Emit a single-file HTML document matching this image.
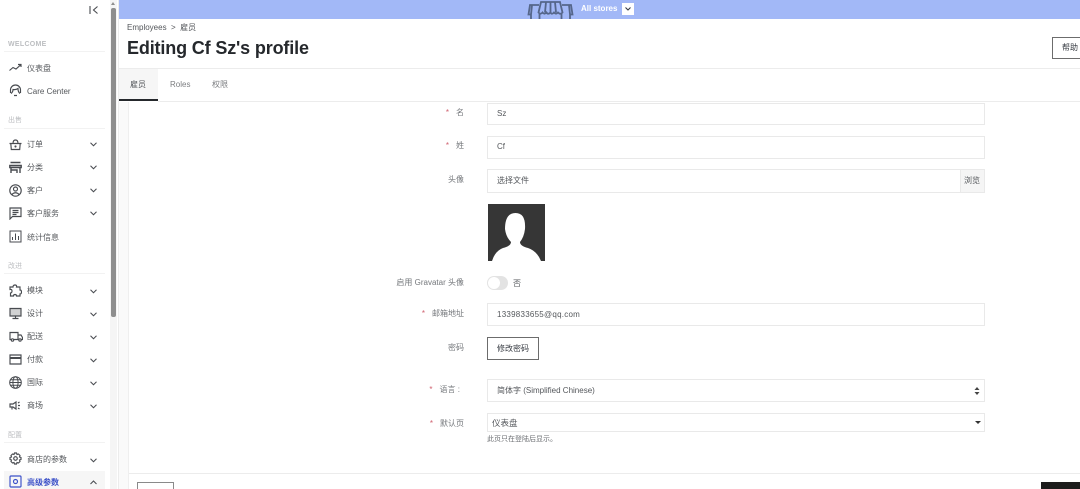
<!DOCTYPE html>
<html><head><meta charset="utf-8">
<style>
html,body{margin:0;padding:0;width:1080px;height:489px;overflow:hidden;background:#fff}
body{position:relative;font-family:"Liberation Sans","Noto Sans CJK SC",sans-serif;color:#363a41}
.a{position:absolute}
.t{position:absolute;white-space:nowrap;line-height:16px;font-size:8px}
.nav{color:#54575b;left:27px}
.sec{left:8px;font-size:7px;color:#bcbec1}
.hr{position:absolute;left:4px;width:101px;height:1px;background:#f2f2f2}
.lab{position:absolute;right:616px;white-space:nowrap;font-size:8px;line-height:16px;color:#75787c}
.req{color:#d0616f;margin-right:7px}
.inp{position:absolute;left:487px;width:496px;background:#fff;border:1px solid #e9e9e9;font-size:8px;color:#54575b;box-sizing:content-box}
.inp span{position:absolute;left:9px;white-space:nowrap}
svg.i{position:absolute;left:9px;width:13px;height:13px;fill:none;stroke:#484b50;stroke-width:1.15}
svg.c{position:absolute;left:90px;width:7px;height:5px;fill:none;stroke:#484b50;stroke-width:1.05}
</style></head><body>

<!-- sidebar -->
<svg class="a" style="left:89px;top:5px;width:10px;height:10px" viewBox="0 0 10 10" fill="none" stroke="#484b50" stroke-width="1.1"><path d="M1 1V9M8.500 1.500L4.500 5L8.500 8.500"/></svg>
<div class="t sec" style="top:37px;font-weight:bold;letter-spacing:.3px">WELCOME</div><div class="hr" style="top:51px"></div>
<svg class="i" style="top:61px" viewBox="0 0 13 13"><path d="M0.500 9.500L4 6.500L7 8L11.500 4M9 3.500H12V6"/></svg>
<div class="t nav" style="top:61px">仪表盘</div>
<svg class="i" style="top:84px" viewBox="0 0 13 13"><path d="M1.500 9V6A5 5 0 0 1 11.500 6V9M2 9.500Q4 8 4 5.500Q7 6 9 4.500Q9 8 11 9.500M5 11.500H8"/></svg>
<div class="t nav" style="top:84px">Care Center</div>

<div class="t sec" style="top:113px">出售</div><div class="hr" style="top:128px"></div>
<svg class="i" style="top:138px" viewBox="0 0 13 13"><path d="M0.500 5.500H12.500M1.800 5.500L2.300 11.500H10.700L11.200 5.500M4 5.500Q4 2 6.500 2Q9 2 9 5.500"/><circle cx="6.500" cy="8.500" r=".5"/></svg>
<div class="t nav" style="top:137px">订单</div><svg class="c" style="top:142px" viewBox="0 0 7 5"><path d="M.5 .8L3.500 3.800L6.500 .8"/></svg>
<svg class="i" style="top:161px" viewBox="0 0 13 13"><path d="M1.500 1.500H11.500M0.800 4.500H12.200V6.500H0.800ZM2 6.500V12M2 9H8V12M11 6.500V12" stroke-width="1.400"/></svg>
<div class="t nav" style="top:160px">分类</div><svg class="c" style="top:165px" viewBox="0 0 7 5"><path d="M.5 .8L3.500 3.800L6.500 .8"/></svg>
<svg class="i" style="top:184px" viewBox="0 0 13 13"><circle cx="6.500" cy="6.500" r="5.700"/><circle cx="6.500" cy="5" r="2"/><path d="M2.800 10.500Q6.500 7 10.200 10.500"/></svg>
<div class="t nav" style="top:183px">客户</div><svg class="c" style="top:188px" viewBox="0 0 7 5"><path d="M.5 .8L3.500 3.800L6.500 .8"/></svg>
<svg class="i" style="top:207px" viewBox="0 0 13 13"><path d="M1 1H12V9.500H3.500L1 12ZM3.500 3.500H9.500M3.500 5.500H9.500M3.500 7.500H7.500"/></svg>
<div class="t nav" style="top:206px">客户服务</div><svg class="c" style="top:211px" viewBox="0 0 7 5"><path d="M.5 .8L3.500 3.800L6.500 .8"/></svg>
<svg class="i" style="top:230px;stroke-width:1" viewBox="0 0 13 13"><path d="M1 1H12V12H1ZM3.500 10V7M6.500 10V3.500M9.500 10V6"/></svg>
<div class="t nav" style="top:230px">统计信息</div>

<div class="t sec" style="top:259px">改进</div><div class="hr" style="top:273px"></div>
<svg class="i" style="top:284px" viewBox="0 0 13 13"><path d="M1 3H4Q4 1 6 1Q8 1 7.500 3H11V6Q12.500 6 12.500 8T11 10V12H7.500Q7.500 10.500 6 10.500T4.500 12H1.500V9Q3 9 3 7T1 5.500Z"/></svg>
<div class="t nav" style="top:283px">模块</div><svg class="c" style="top:289px" viewBox="0 0 7 5"><path d="M.5 .8L3.500 3.800L6.500 .8"/></svg>
<svg class="i" style="top:307px" viewBox="0 0 13 13"><path d="M1 1.500H12V9H1Z" fill="#484b50" fill-opacity=".25"/><path d="M3.500 11.500H9.500M6.500 9V11.500"/></svg>
<div class="t nav" style="top:306px">设计</div><svg class="c" style="top:312px" viewBox="0 0 7 5"><path d="M.5 .8L3.500 3.800L6.500 .8"/></svg>
<svg class="i" style="top:330px;width:14px" viewBox="0 0 14 13"><path d="M2 9.500H1V2.500H9V9.500H5M9 5H12L13.500 7.500V9.500H12M9 9.500H10"/><circle cx="3.500" cy="10" r="1.200"/><circle cx="11" cy="10" r="1.200"/></svg>
<div class="t nav" style="top:329px">配送</div><svg class="c" style="top:335px" viewBox="0 0 7 5"><path d="M.5 .8L3.500 3.800L6.500 .8"/></svg>
<svg class="i" style="top:353px" viewBox="0 0 13 13"><path d="M1 2H12V11H1Z"/><path d="M1 5H12" stroke-width="2"/></svg>
<div class="t nav" style="top:352px">付款</div><svg class="c" style="top:358px" viewBox="0 0 7 5"><path d="M.5 .8L3.500 3.800L6.500 .8"/></svg>
<svg class="i" style="top:376px;stroke-width:1" viewBox="0 0 13 13"><circle cx="6.500" cy="6.500" r="5.800"/><ellipse cx="6.500" cy="6.500" rx="2.600" ry="5.800"/><path d="M.7 6.500H12.300M1.500 3.700H11.500M1.500 9.300H11.500"/></svg>
<div class="t nav" style="top:375px">国际</div><svg class="c" style="top:381px" viewBox="0 0 7 5"><path d="M.5 .8L3.500 3.800L6.500 .8"/></svg>
<svg class="i" style="top:399px" viewBox="0 0 13 13"><path d="M1 5H4L7 3V10L4 8H1ZM3 8V10.500M9 6.500H11M9 4L10.500 3M9 9L10.500 10"/></svg>
<div class="t nav" style="top:398px">商场</div><svg class="c" style="top:404px" viewBox="0 0 7 5"><path d="M.5 .8L3.500 3.800L6.500 .8"/></svg>

<div class="t sec" style="top:428px">配置</div><div class="hr" style="top:442px"></div>
<svg class="i" style="top:452px" viewBox="0 0 13 13"><circle cx="6.500" cy="6.500" r="1.800"/><path d="M5.500 1H7.500L8 2.500L9.500 2L11 3.500L10.500 5L12 5.500V7.500L10.500 8L11 9.500L9.500 11L8 10.500L7.500 12H5.500L5 10.500L3.500 11L2 9.500L2.500 8L1 7.500V5.500L2.500 5L2 3.500L3.500 2L5 2.500Z"/></svg>
<div class="t nav" style="top:452px">商店的参数</div><svg class="c" style="top:458px" viewBox="0 0 7 5"><path d="M.5 .8L3.500 3.800L6.500 .8"/></svg>
<div class="a" style="left:4px;top:471px;width:101px;height:18px;background:#f6f6f6"></div>
<svg class="i" style="top:475px;stroke:#3b50c8" viewBox="0 0 13 13"><rect x="1" y="1" width="11" height="11" rx="1"/><circle cx="6.500" cy="6.500" r="2"/></svg>
<div class="t nav" style="top:475px;color:#3b50c8;font-weight:bold">高级参数</div><svg class="c" style="top:480px" viewBox="0 0 7 5"><path d="M.5 4L3.500 1L6.500 4"/></svg>

<!-- scrollbar -->
<div class="a" style="left:110px;top:0;width:7px;height:489px;background:#f5f5f5"></div>
<div class="a" style="left:111px;top:8px;width:5px;height:309px;background:#8e8e8e;border-radius:2px"></div>
<div class="a" style="left:111px;top:2px;width:0;height:0;border:2.500px solid transparent;border-top:0;border-bottom:3px solid #8e8e8e"></div>
<div class="a" style="left:118px;top:0;width:1px;height:489px;background:#ececec"></div>

<!-- top bar -->
<div class="a" style="left:119px;top:0;width:961px;height:19px;background:#a2b8f7"></div>
<svg class="a" style="left:527px;top:0;width:47px;height:19px" viewBox="0 0 47 19" fill="none" stroke="#55668a" stroke-width="1.800"><path d="M12 5H3L1.500 14.500H4L5 5M4 14.500V19M35 5H44L45.500 14.500H43L42 5M43 14.500V19M14 2H33L35.500 12.500Q33.500 15 31 12.500Q29 15 27 12.500Q25 15 23.500 12.500Q21 15 19.500 12.500Q17.500 15 15.500 12.500Q13.500 15 11.500 12.500ZM19 2L18 12.500M23.500 2V12.500M28 2L29 12.500M12.500 13.500V19M34.500 13.500V19"/></svg>
<div class="t" style="left:581px;top:1px;color:#fff;font-weight:bold;font-size:8px">All stores</div>
<div class="a" style="left:622px;top:3px;width:12px;height:12px;background:#fff"></div>
<svg class="a" style="left:625px;top:7px;width:6px;height:4px" viewBox="0 0 6 4" fill="none" stroke="#363a41" stroke-width="1.100"><path d="M.5 .5L3 3L5.500 .5"/></svg>

<!-- header -->
<div class="t" style="left:127px;top:20px;color:#54575b">Employees &nbsp;&gt;&nbsp; 雇员</div>
<div class="t" style="left:127px;top:36px;font-size:18px;line-height:24px;font-weight:bold;color:#25282c;letter-spacing:-.15px">Editing Cf Sz's profile</div>
<div class="a" style="left:1052px;top:37px;width:40px;height:22px;border:1px solid #6c6c6c;box-sizing:border-box;background:#fff"></div>
<div class="t" style="left:1062px;top:40px;color:#363a41">帮助</div>
<div class="a" style="left:119px;top:68px;width:961px;height:1px;background:#ececec"></div>

<!-- tabs -->
<div class="a" style="left:119px;top:69px;width:39px;height:30px;background:#f6f6f6"></div>
<div class="a" style="left:119px;top:99px;width:39px;height:2px;background:#25282c"></div>
<div class="a" style="left:158px;top:101px;width:922px;height:1px;background:#ececec"></div>
<div class="t" style="left:130px;top:77px;color:#54575b">雇员</div>
<div class="t" style="left:170px;top:77px;color:#7b7d80">Roles</div>
<div class="t" style="left:212px;top:77px;color:#7b7d80">权限</div>

<div class="a" style="left:128px;top:102px;width:1px;height:387px;background:#efefef"></div>
<div class="a" style="left:119px;top:102px;width:9px;height:387px;background:#fafafa"></div>

<!-- form -->
<div class="lab" style="top:105px"><span class="req">*</span>名</div>
<div class="inp" style="top:103px;height:20px"><span style="top:3px;line-height:14px">Sz</span></div>
<div class="lab" style="top:138px"><span class="req">*</span>姓</div>
<div class="inp" style="top:136px;height:21px"><span style="top:3px;line-height:14px">Cf</span></div>
<div class="lab" style="top:172px">头像</div>
<div class="inp" style="top:169px;height:22px"><span style="top:4px;line-height:14px">选择文件</span></div>
<div class="a" style="left:960px;top:169px;width:25px;height:24px;background:#f5f5f5;border:1px solid #e9e9e9;box-sizing:border-box"></div>
<div class="t" style="left:964px;top:173px;color:#54575b">浏览</div>

<svg class="a" style="left:488px;top:204px;width:57px;height:57px" viewBox="0 0 57 57"><rect width="57" height="57" fill="#363636"/><path d="M4 57Q7 47 15 44Q23 42 23 38Q18 33 17 25Q17 9 27.500 9Q38 9 37 25Q36 33 32 38Q32 42 40 44Q49 47 53 57Z" fill="#fff"/></svg>

<div class="lab" style="top:275px">启用 Gravatar 头像</div>
<div class="a" style="left:487px;top:276px;width:21px;height:14px;border-radius:7px;background:#e3e3e3"></div>
<div class="a" style="left:488px;top:277px;width:12px;height:12px;border-radius:6px;background:#fff"></div>
<div class="t" style="left:513px;top:276px;color:#54575b">否</div>

<div class="lab" style="top:306px"><span class="req">*</span>邮箱地址</div>
<div class="inp" style="top:303px;height:21px"><span style="top:4px;line-height:14px;letter-spacing:.25px">1339833655@qq.com</span></div>
<div class="lab" style="top:340px">密码</div>
<div class="a" style="left:487px;top:337px;width:52px;height:23px;border:1px solid #6c6c6c;box-sizing:border-box"></div>
<div class="t" style="left:497px;top:341px;color:#363a41">修改密码</div>

<div class="lab" style="top:382px;right:620px"><span class="req">*</span>语言 :</div>
<div class="inp" style="top:379px;height:21px"><span style="top:4px;line-height:14px">简体字 (Simplified Chinese)</span></div>
<svg class="a" style="left:974px;top:387px;width:6px;height:8px" viewBox="0 0 6 8" fill="#444"><path d="M3 0L5.500 3H.5ZM3 8L5.500 5H.5Z"/></svg>
<div class="lab" style="top:416px"><span class="req">*</span>默认页</div>
<div class="inp" style="top:413px;height:17px;font-size:8.500px"><span style="left:4px;top:2px;line-height:14px">仪表盘</span></div>
<div class="a" style="left:975px;top:421px;width:0;height:0;border:3px solid transparent;border-bottom:0;border-top:3.500px solid #333"></div>
<div class="t" style="left:487px;top:432px;font-size:7px;color:#6c6f73">此页只在登陆后显示。</div>

<!-- footer -->
<div class="a" style="left:129px;top:473px;width:951px;height:1px;background:#ececec"></div>
<div class="a" style="left:137px;top:482px;width:37px;height:10px;border:1px solid #8a8a8a;box-sizing:border-box"></div>
<div class="a" style="left:1041px;top:482px;width:39px;height:7px;background:#1c1c1c"></div>
</body></html>
